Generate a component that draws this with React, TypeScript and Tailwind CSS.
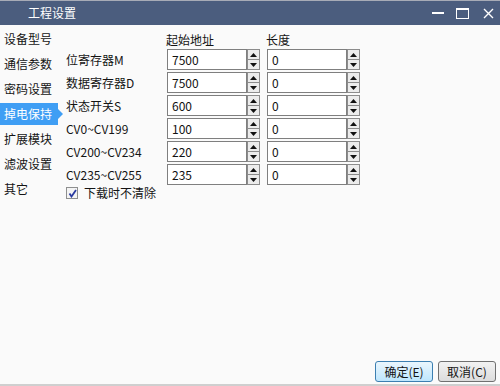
import React from 'react';

const navItems = ['设备型号', '通信参数', '密码设置', '掉电保持', '扩展模块', '滤波设置', '其它'];

const rows = [
    { label: '位寄存器M', start: '7500', len: '0' },
    { label: '数据寄存器D', start: '7500', len: '0' },
    { label: '状态开关S', start: '600', len: '0' },
    { label: 'CV0~CV199', start: '100', len: '0' },
    { label: 'CV200~CV234', start: '220', len: '0' },
    { label: 'CV235~CV255', start: '235', len: '0' },
];

const SpinBox = ({ value }: { value: string }) => {
    return (
        <div className="flex h-[21px]">
            <div className="flex h-full w-[80px] items-center border border-[#7f7f7f] bg-white pl-[4px] text-[12px] text-[#111]">
                {value}
            </div>
            <div className="flex h-full w-[13px] flex-col">
                <div className="flex h-[11px] items-center justify-center border border-[#8c8c8c] bg-[#ececec]">
                    <svg width="7" height="4" viewBox="0 0 7 4">
                        <polygon points="0,4 7,4 3.5,0" fill="#111" />
                    </svg>
                </div>
                <div className="flex h-[10px] items-center justify-center border border-t-0 border-[#8c8c8c] bg-[#ececec]">
                    <svg width="7" height="4" viewBox="0 0 7 4">
                        <polygon points="0,0 7,0 3.5,4" fill="#111" />
                    </svg>
                </div>
            </div>
        </div>
    );
};

export default function App() {
    return (
        <div
            className="flex h-[386px] w-[500px] flex-col overflow-hidden bg-[#fafafa] text-[12px] text-[#141414]"
            style={{ fontFamily: '"Noto Sans CJK SC", "Noto Sans", sans-serif' }}
        >
            {/* title bar */}
            <div className="flex h-[25px] shrink-0 items-center border-t border-[#a7abb6] bg-[#4b5d7e] text-white">
                <div className="pl-[28px] text-[12px]">工程设置</div>
                <div className="ml-auto flex items-center">
                    <div className="mr-[12px] h-[2px] w-[12px] bg-white" />
                    <div className="mr-[14px] h-[11px] w-[13px] border border-t-2 border-white" />
                    <svg width="11" height="11" viewBox="0 0 11 11" className="mr-[6px]">
                        <path d="M1 1 L10 10 M10 1 L1 10" stroke="white" strokeWidth="1.4" />
                    </svg>
                </div>
            </div>

            {/* body */}
            <div className="flex flex-1">
                <div className="flex w-[66px] shrink-0 flex-col">
                    {navItems.map((item) =>
                        item === '掉电保持' ? (
                            <div key={item} className="flex h-[25px] items-end">
                                <div className="relative flex h-[22px] w-[58px] items-center bg-[#3f9ef4] pl-[4px] text-white">
                                    {item}
                                    <div className="absolute right-[-5px] top-[6px] h-0 w-0 border-y-[5px] border-l-[5px] border-y-transparent border-l-[#3f9ef4]" />
                                </div>
                            </div>
                        ) : (
                            <div key={item} className="flex h-[25px] items-end">
                                <div className="flex h-[22px] items-center pl-[4px]">{item}</div>
                            </div>
                        )
                    )}
                </div>

                <div className="flex flex-col pt-[5px]">
                    <div className="flex h-[19px] items-center">
                        <div className="w-[100px]" />
                        <div className="w-[100px]">起始地址</div>
                        <div>长度</div>
                    </div>
                    <div className="flex flex-col gap-[2px]">
                        {rows.map((r) => (
                            <div key={r.label} className="flex items-center">
                                <div className="w-[101px]">{r.label}</div>
                                <SpinBox value={r.start} />
                                <div className="w-[7px]" />
                                <SpinBox value={r.len} />
                            </div>
                        ))}
                    </div>
                    <div className="flex h-[16px] items-center">
                        <div className="flex h-[12px] w-[12px] items-center justify-center border border-[#8e8f8f] bg-[#f4f4f4]">
                            <svg width="9" height="9" viewBox="0 0 9 9">
                                <path d="M1.5 4.5 L3.5 7.5 L8 1" stroke="#2a3aa0" strokeWidth="1.8" fill="none" />
                            </svg>
                        </div>
                        <div className="ml-[6px]">下载时不清除</div>
                    </div>
                </div>
            </div>

            {/* buttons */}
            <div className="flex shrink-0 justify-end gap-[5px] pb-[2px] pr-[4px]">
                <button className="flex h-[21px] w-[58px] items-center justify-center rounded-[3px] border border-[#3c7fb1] bg-gradient-to-b from-[#eaf6fd] to-[#bee6fd] text-[12px]">
                    确定(E)
                </button>
                <button className="flex h-[21px] w-[58px] items-center justify-center rounded-[3px] border border-[#707070] bg-gradient-to-b from-[#f2f2f2] to-[#dcdcdc] text-[12px]">
                    取消(C)
                </button>
            </div>
            <div className="h-[2px] shrink-0 bg-[#cfcfcf]" />
        </div>
    );
}
